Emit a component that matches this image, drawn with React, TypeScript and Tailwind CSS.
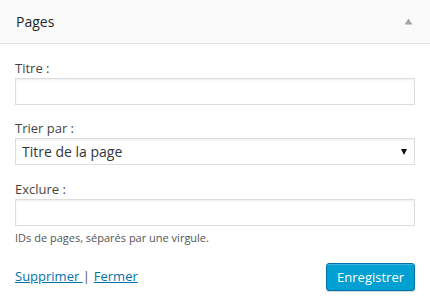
import React from 'react';

const font = { fontFamily: '"Open Sans", "Noto Sans", sans-serif' };

function Field({ label, children }: { label: string; children: React.ReactNode }) {
  return (
    <div>
      <label className="block text-[13px] leading-[18px] mb-px text-[#444]">{label}</label>
      {children}
    </div>
  );
}

export default function App() {
  return (
    <div className="w-[430px] h-[301px] bg-white overflow-hidden" style={font}>
      {/* Header */}
      <div className="h-[44px] bg-[#fafafa] border-b border-[#e5e5e5] flex items-center justify-between pl-[16px] pr-[17px]">
        <h3 className="text-[14px] font-normal text-[#23282d] leading-none">Pages</h3>
        <svg width="9" height="7" viewBox="0 0 9 7" className="mb-px">
          <path d="M4.5 0.5 L8.5 6.5 L0.5 6.5 Z" fill="#a0a5aa" />
        </svg>
      </div>

      {/* Body */}
      <div className="px-[15px] pt-[15px]">
        <Field label="Titre :">
          <input
            type="text"
            className="block w-full h-[27px] border border-[#ddd] bg-white shadow-[inset_0_1px_2px_rgba(0,0,0,0.07)] outline-none"
          />
        </Field>

        <div className="mt-[14px]">
          <Field label="Trier par :">
            <div className="relative">
              <select
                defaultValue="post_title"
                className="block w-full h-[27px] appearance-none border border-[#ddd] bg-white pl-[6px] text-[14px] text-[#32373c] shadow-[inset_0_1px_2px_rgba(0,0,0,0.07)] outline-none"
              >
                <option value="post_title">Titre de la page</option>
                <option value="menu_order">Ordre des pages</option>
                <option value="ID">ID de la page</option>
              </select>
              <svg width="6" height="6" viewBox="0 0 6 6" className="absolute right-[8px] top-[11px] pointer-events-none">
                <path d="M0 0 H6 L3 6 Z" fill="#111" />
              </svg>
            </div>
          </Field>
        </div>

        <div className="mt-[15px]">
          <Field label="Exclure :">
            <input
              type="text"
              className="block w-full h-[27px] border border-[#ddd] bg-white shadow-[inset_0_1px_2px_rgba(0,0,0,0.07)] outline-none"
            />
          </Field>
          <p className="text-[11px] leading-[16px] mt-[4px] text-[#555]">IDs de pages, séparés par une virgule.</p>
        </div>

        <div className="flex items-center justify-between mt-[17px]">
          <div className="text-[13px] text-[#555]">
            <a href="#" className="text-[#0073aa] underline">Supprimer </a>
            <span className="mr-[4px]">|</span>
            <a href="#" className="text-[#0073aa] underline">Fermer</a>
          </div>
          <button className="h-[28px] px-[10px] rounded-[3px] bg-[#00a0d2] border border-[#0073aa] text-white text-[13px] leading-none shadow-[inset_0_1px_0_rgba(120,200,230,0.5),0_1px_0_rgba(0,0,0,0.15)]">
            Enregistrer
          </button>
        </div>
      </div>
    </div>
  );
}
